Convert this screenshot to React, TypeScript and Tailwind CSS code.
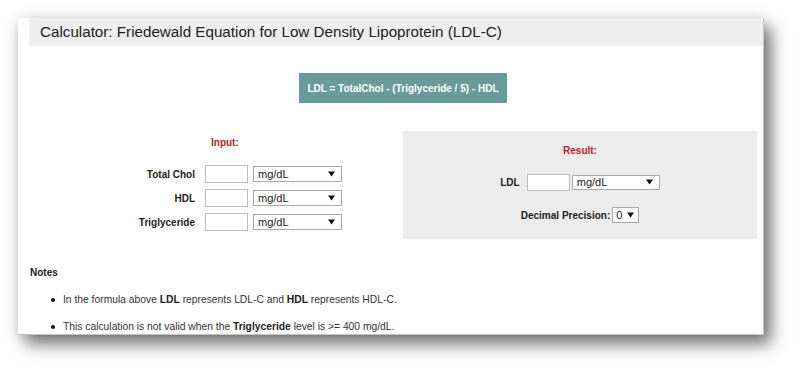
const font = "font-['Liberation_Sans',Arial,sans-serif]";

function Arrow() {
  return (
    <svg width="7" height="6" viewBox="0 0 7 6" className="shrink-0">
      <path d="M0 0.5 L7 0.5 L3.5 5.5 Z" fill="#111" />
    </svg>
  );
}

function UnitSelect({ label, w, h, pl = "pl-[4px]", pr = "pr-[6px]" }: { label: string; w: string; h: string; pl?: string; pr?: string }) {
  return (
    <div
      className={`${w} ${h} ${pl} ${pr} flex items-center justify-between border border-[#a9a9a9] bg-white text-[11px] leading-none text-[#222]`}
    >
      <span>{label}</span>
      <Arrow />
    </div>
  );
}

function InputRow({ label }: { label: string }) {
  return (
    <div className="flex h-[24px] items-center">
      <div className="w-[177px] text-right text-[10px] font-bold text-[#222]">{label}</div>
      <div className="ml-[10px] h-[18px] w-[43px] border border-[#bdbdbd] bg-white" />
      <div className="ml-[5px]">
        <UnitSelect label="mg/dL" w="w-[89px]" h="h-[16px]" />
      </div>
    </div>
  );
}

export default function App() {
  return (
    <div className={`${font} h-[371px] w-[800px] overflow-hidden bg-white pt-[18px] pl-[18px]`}>
      <div className="h-[317px] w-[746px] border-r border-b border-[#c4c4c4] bg-white shadow-[7px_9px_16px_rgba(0,0,0,0.55),0_0_14px_rgba(0,0,0,0.1)]">
        <div className="ml-[11px] flex h-[28px] items-center bg-[#eeeeee] pl-[11px] text-[15.2px] text-[#222]">
          Calculator: Friedewald Equation for Low Density Lipoprotein (LDL-C)
        </div>

        <div className="mt-[27px] ml-[281px] flex h-[30px] w-[208px] items-center justify-center bg-[#6a9b9b] text-[10px] font-bold text-white">
          LDL = TotalChol - (Triglyceride / 5) - HDL
        </div>

        <div className="mt-[28px] flex">
          <div className="w-[385px]">
            <div className="mt-[6px] h-[12px] pl-[193px] text-[10px] leading-[12px] font-bold text-[#b22525]">
              Input:
            </div>
            <div className="mt-[13px]">
              <InputRow label="Total Chol" />
              <InputRow label="HDL" />
              <InputRow label="Triglyceride" />
            </div>
          </div>

          <div className="flex h-[108px] w-[354px] flex-col items-center bg-[#ececec] pt-[14px]">
            <div className="h-[12px] text-[10px] leading-[12px] font-bold text-[#b22525]">Result:</div>
            <div className="mt-[16px] flex h-[18px] items-center">
              <span className="text-[10px] font-bold text-[#222]">LDL</span>
              <div className="ml-[7px] h-[17px] w-[43px] border border-[#bdbdbd] bg-white" />
              <div className="ml-[2px]">
                <UnitSelect label="mg/dL" w="w-[88px]" h="h-[15px]" />
              </div>
            </div>
            <div className="mt-[16px] flex h-[16px] items-center">
              <span className="text-[10px] font-bold text-[#222]">Decimal Precision:</span>
              <div className="ml-[2px]">
                <UnitSelect label="0" w="w-[27px]" h="h-[16px]" pl="pl-[3px]" pr="pr-[4px]" />
              </div>
            </div>
          </div>
        </div>

        <div className="mt-[28px] pl-[12px] text-[10px] leading-[12px] font-bold text-[#222]">Notes</div>
        <ul className="text-[10.3px] leading-[12px] text-[#333]">
          <li className="mt-[15px] flex items-center">
            <span className="ml-[33px] h-[4px] w-[4px] rounded-full bg-[#111]" />
            <span className="ml-[8px]">
              In the formula above <b className="text-[#222]">LDL</b> represents LDL-C and{" "}
              <b className="text-[#222]">HDL</b> represents HDL-C.
            </span>
          </li>
          <li className="mt-[15px] flex items-center">
            <span className="ml-[33px] h-[4px] w-[4px] rounded-full bg-[#111]" />
            <span className="ml-[8px]">
              This calculation is not valid when the <b className="text-[#222]">Triglyceride</b> level is &gt;= 400
              mg/dL.
            </span>
          </li>
        </ul>
      </div>
    </div>
  );
}
